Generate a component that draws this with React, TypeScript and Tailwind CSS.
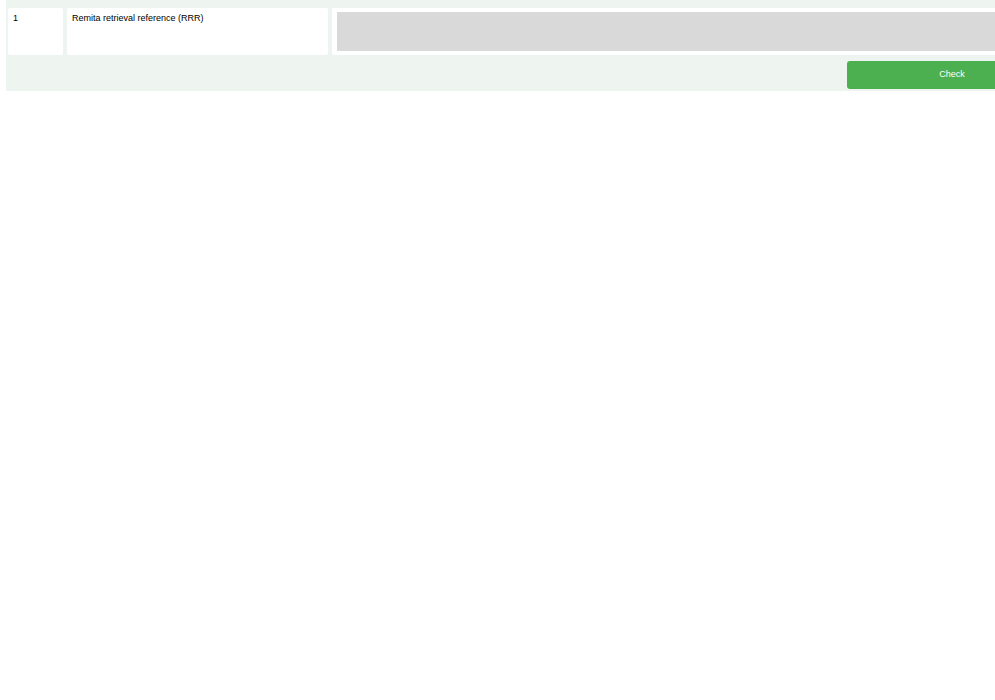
export default function App() {
  return (
    <div className="w-full min-h-[700px] overflow-hidden bg-white font-['Liberation_Sans',Arial,sans-serif]">
      <div className="ml-[6px] w-[1051px] bg-[#eef4f0] pt-[8px] pl-[2px]">
        {/* result row */}
        <div className="flex gap-[4px] h-[47px]">
          <div className="w-[55px] shrink-0 rounded-[2px] bg-white px-[5px] pt-[5px] text-[9px] leading-[11px] text-black">
            1
          </div>
          <div className="w-[261px] shrink-0 rounded-[2px] bg-white px-[5px] pt-[5px] text-[9px] leading-[11px] text-black">
            Remita retrieval reference (RRR)
          </div>
          <div className="flex-1 rounded-[2px] bg-white px-[5px] py-[4px]">
            <div className="h-full w-full bg-[#d9d9d9]" />
          </div>
        </div>
        {/* actions */}
        <div className="flex justify-end pt-[6px] pb-[2px]">
          <button className="h-[28px] w-[210px] rounded-[3px] bg-[#4caf50] text-[9px] text-white">
            Check
          </button>
        </div>
      </div>
    </div>
  );
}
